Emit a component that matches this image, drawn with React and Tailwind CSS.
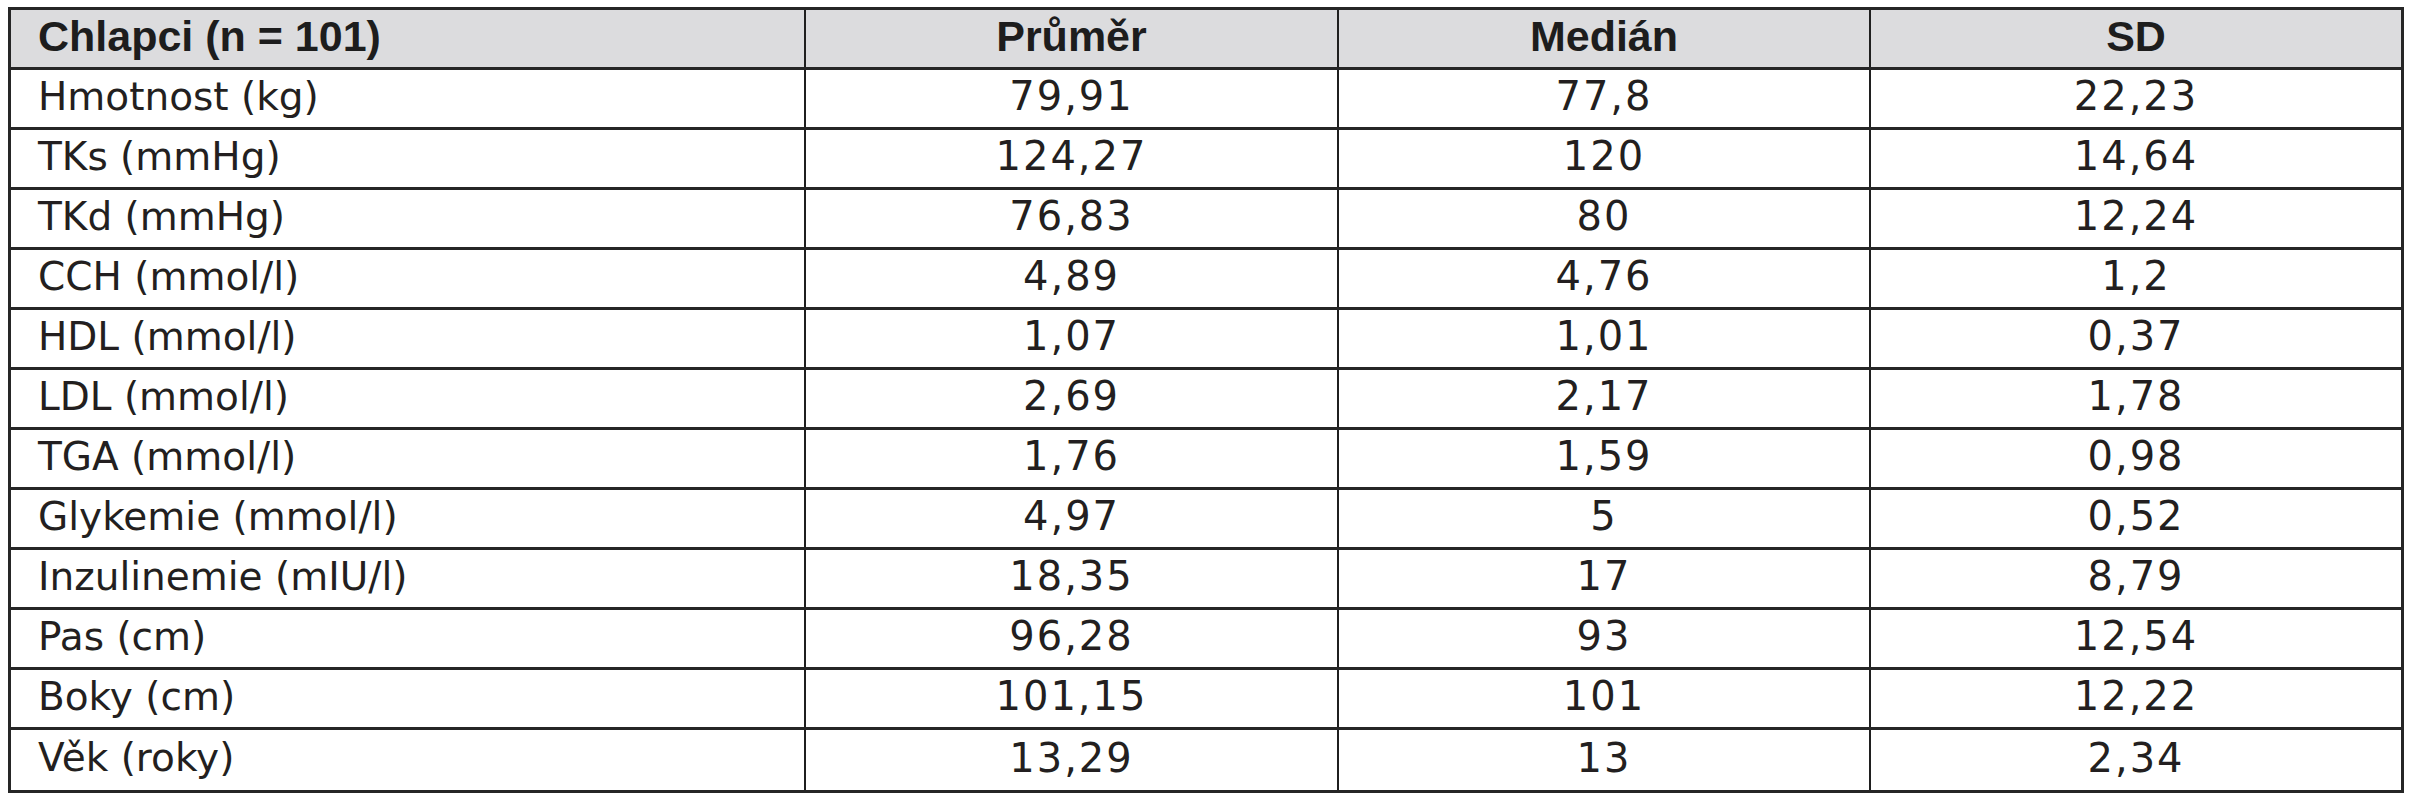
import React from 'react';

const rows = [
  ['Hmotnost (kg)', '79,91', '77,8', '22,23'],
  ['TKs (mmHg)', '124,27', '120', '14,64'],
  ['TKd (mmHg)', '76,83', '80', '12,24'],
  ['CCH (mmol/l)', '4,89', '4,76', '1,2'],
  ['HDL (mmol/l)', '1,07', '1,01', '0,37'],
  ['LDL (mmol/l)', '2,69', '2,17', '1,78'],
  ['TGA (mmol/l)', '1,76', '1,59', '0,98'],
  ['Glykemie (mmol/l)', '4,97', '5', '0,52'],
  ['Inzulinemie (mIU/l)', '18,35', '17', '8,79'],
  ['Pas (cm)', '96,28', '93', '12,54'],
  ['Boky (cm)', '101,15', '101', '12,22'],
  ['Věk (roky)', '13,29', '13', '2,34'],
];

const grid = 'grid grid-cols-[793px_533px_532px_1fr] h-[60px] border-b-[3px] border-[#262626] last:border-b-0';

const HeadCell = ({ children, first }) => (
  <div
    className={`flex items-center pb-[5px] font-['Liberation_Sans',Arial,sans-serif] font-bold text-[43px] leading-none text-[#1d1d1d] ${
      first ? 'pl-[27px]' : 'justify-center border-l-2 border-[#1f1f1f]'
    }`}
  >
    {children}
  </div>
);

const Cell = ({ children, first }) => (
  <div
    className={`flex items-center pb-[5px] font-['DejaVu_Sans',sans-serif] leading-none text-[#231f20] ${
      first ? 'pl-[27px] text-[39px]' : 'justify-center border-l-2 border-[#1f1f1f] text-[40px] tracking-[2px]'
    }`}
  >
    {children}
  </div>
);

export default function App() {
  return (
    <div className="w-[2416px] h-[800px] bg-white pt-[7px] pl-[8px]">
      <div className="w-[2396px] border-[3px] border-[#262626] flex flex-col">
        <div className={`${grid} bg-[#dcdcde]`}>
          <HeadCell first>Chlapci (n = 101)</HeadCell>
          <HeadCell>Průměr</HeadCell>
          <HeadCell>Medián</HeadCell>
          <HeadCell>SD</HeadCell>
        </div>
        {rows.map((r) => (
          <div key={r[0]} className={grid}>
            <Cell first>{r[0]}</Cell>
            <Cell>{r[1]}</Cell>
            <Cell>{r[2]}</Cell>
            <Cell>{r[3]}</Cell>
          </div>
        ))}
      </div>
    </div>
  );
}
